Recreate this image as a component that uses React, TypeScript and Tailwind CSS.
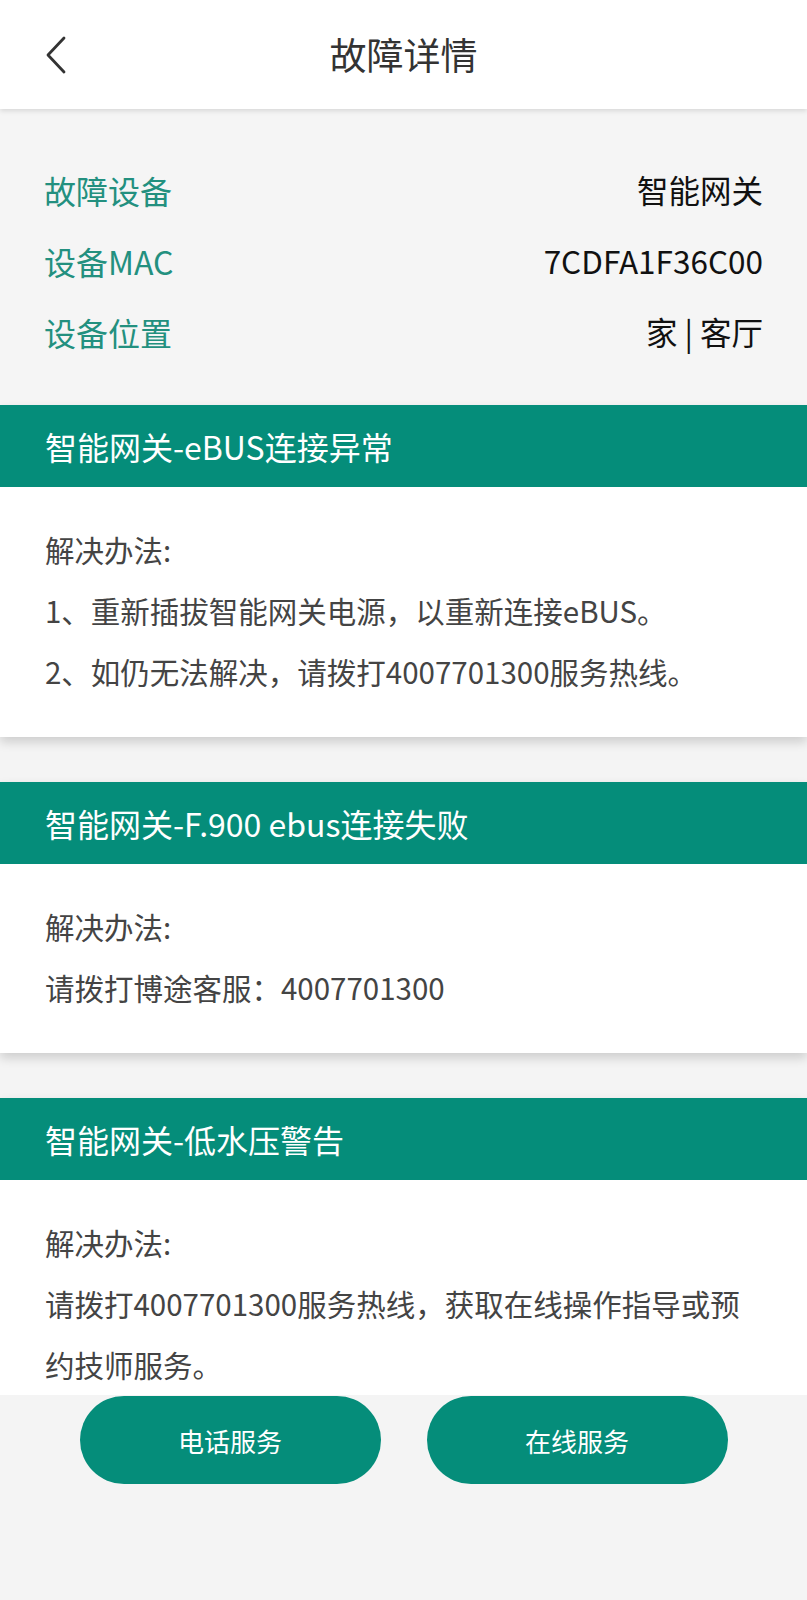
const FONT = "font-['Noto_Sans_CJK_SC','Noto_Sans',sans-serif]";

interface Fault {
  title: string;
  lines: string[];
  last?: boolean;
}

const INFO = [
  { label: '故障设备', value: '智能网关' },
  { label: '设备MAC', value: '7CDFA1F36C00' },
  { label: '设备位置', value: '家 | 客厅' },
];

const FAULTS: Fault[] = [
  {
    title: '智能网关-eBUS连接异常',
    lines: ['解决办法:', '1、重新插拔智能网关电源，以重新连接eBUS。', '2、如仍无法解决，请拨打4007701300服务热线。'],
  },
  {
    title: '智能网关-F.900 ebus连接失败',
    lines: ['解决办法:', '请拨打博途客服：4007701300'],
  },
  {
    title: '智能网关-低水压警告',
    lines: ['解决办法:', '请拨打4007701300服务热线，获取在线操作指导或预约技师服务。'],
    last: true,
  },
];

function FaultCard({ title, lines, last }: Fault) {
  return (
    <div className="bg-white shadow-[0_5px_10px_rgba(0,0,0,0.16)]">
      <div className="flex h-[82px] items-center bg-[#058d7a] px-[45px] text-[32px] text-white">{title}</div>
      <div className={`px-[45px] pr-[60px] pt-[32px] ${last ? 'pb-0' : 'pb-[35px]'}`}>
        {lines.map((l) => (
          <p key={l} className="text-[29.5px] leading-[61px] text-[#444]">
            {l}
          </p>
        ))}
      </div>
    </div>
  );
}

export default function App() {
  return (
    <div className={`${FONT} flex min-h-[1600px] w-[807px] flex-col bg-[#f4f4f4]`}>
      {/* Header */}
      <div className="relative z-10 flex h-[109px] items-center justify-center bg-white shadow-[0_2px_5px_rgba(0,0,0,0.12)]">
        <svg className="absolute left-[42px] top-[35px]" width="28" height="40" viewBox="0 0 28 40">
          <path d="M22 3 L6 20 L22 37" fill="none" stroke="#333" strokeWidth="2.8" strokeLinecap="round" strokeLinejoin="round" />
        </svg>
        <h1 className="text-[37px] font-normal text-[#333]">故障详情</h1>
      </div>

      {/* Device info */}
      <div className="bg-[#f5f5f5] px-[44px] pb-[38px] pt-[45px]">
        {INFO.map((r) => (
          <div key={r.label} className="flex h-[71px] items-center justify-between">
            <span className="text-[32px] text-[#23907f]">{r.label}</span>
            <span className="whitespace-pre text-[31.5px] text-[#111]">{r.value}</span>
          </div>
        ))}
      </div>

      {/* Fault cards */}
      <div className="flex flex-col gap-[45px]">
        {FAULTS.map((f) => (
          <FaultCard key={f.title} {...f} />
        ))}
      </div>

      {/* Footer buttons */}
      <div className="relative z-10 flex flex-1 justify-center gap-[46px] bg-[#f4f4f4] pt-px">
        <button className="h-[88px] w-[301px] rounded-full bg-[#058d7a] text-[26px] text-white">电话服务</button>
        <button className="h-[88px] w-[301px] rounded-full bg-[#058d7a] text-[26px] text-white">在线服务</button>
      </div>
    </div>
  );
}
